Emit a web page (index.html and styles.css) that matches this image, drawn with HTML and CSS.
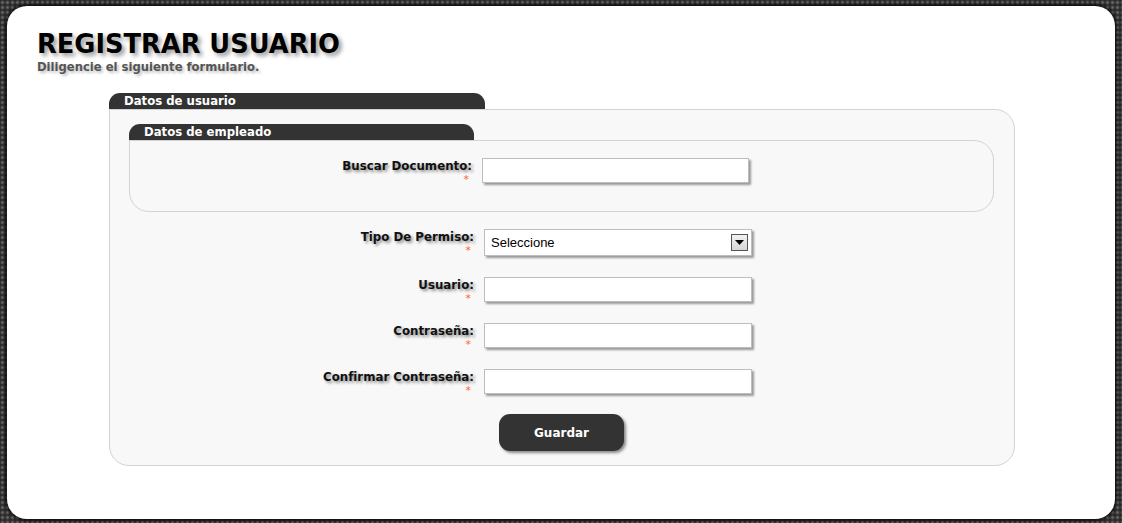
FILE: index.html
```html
<!DOCTYPE html>
<html lang="es">
<head>
<meta charset="utf-8">
<title>Registrar Usuario</title>
<link rel="stylesheet" href="styles.css">
</head>
<body>
<div class="page">
  <h1 class="title">REGISTRAR USUARIO</h1>
  <p class="subtitle">Diligencie el siguiente formulario.</p>

  <section class="group">
    <div class="tab tab-outer">Datos de usuario</div>
    <div class="box">
      <div class="tab tab-inner">Datos de empleado</div>
      <div class="inner-box">
        <div class="row row-inner">
          <label class="label"><span class="label-text">Buscar Documento:</span><span class="req">*</span></label>
          <input class="field" type="text">
        </div>
      </div>

      <div class="row">
        <label class="label"><span class="label-text">Tipo De Permiso:</span><span class="req">*</span></label>
        <div class="select">
          <span class="select-text">Seleccione</span>
          <span class="select-btn"><svg width="9" height="5" viewBox="0 0 9 5"><path d="M0 0h9L4.5 5z" fill="#000"/></svg></span>
        </div>
      </div>
      <div class="row">
        <label class="label"><span class="label-text">Usuario:</span><span class="req">*</span></label>
        <input class="field" type="text">
      </div>
      <div class="row">
        <label class="label"><span class="label-text">Contraseña:</span><span class="req">*</span></label>
        <input class="field" type="password">
      </div>
      <div class="row row-last">
        <label class="label"><span class="label-text">Confirmar Contraseña:</span><span class="req">*</span></label>
        <input class="field" type="password">
      </div>
      <div class="actions">
        <button class="btn" type="button">Guardar</button>
      </div>
    </div>
  </section>
</div>
</body>
</html>
```
FILE: styles.css
```css
* { box-sizing: border-box; }
html, body { margin: 0; padding: 0; }
body {
  height: 523px;
  overflow: hidden;
  background-color: #2e2e2e;
  background-image: radial-gradient(circle at 2.5px 2.5px, #6a6a6a 0, #555 1.2px, #2b2b2b 2.4px);
  background-size: 5px 5px;
  padding: 6px 7px 4px 7px;
  font-family: "DejaVu Sans", Verdana, sans-serif;
}
.page {
  height: 513px;
  background: #fff;
  border-radius: 20px;
  box-shadow: 0 0 4px 1px #000;
  padding: 23px 100px 0 30px;
}
.title {
  margin: 0;
  font-size: 25.7px;
  font-weight: bold;
  color: #000;
  line-height: 30px;
  text-shadow: 3px 3px 4px #999;
}
.subtitle {
  margin: 1px 0 0;
  font-size: 11.6px;
  font-weight: bold;
  color: #555;
  line-height: 14px;
  text-shadow: 2px 2px 3px #bbb;
}
.group {
  margin: 19px 0 0 72px;
}
.tab {
  background: #333;
  color: #fff;
  font-weight: bold;
  font-size: 11.7px;
  line-height: 16px;
  border-radius: 11px 11px 0 0;
  padding-left: 15px;
}
.tab-outer {
  width: 376px;
  height: 16px;
}
.box {
  background: #f8f8f8;
  border: 1px solid #d3d3d3;
  border-radius: 0 20px 20px 20px;
  padding: 14px 20px 14px 19px;
  height: 357px;
}
.tab-inner {
  width: 345px;
  height: 16px;
  padding-left: 15px;
}
.inner-box {
  border: 1px solid #d3d3d3;
  border-radius: 0 20px 20px 20px;
  height: 72px;
  padding-top: 17px;
  margin-bottom: 17px;
}
.row {
  display: flex;
  align-items: flex-start;
  gap: 10px;
  margin-bottom: 21px;
}
.row-last { margin-bottom: 20px; }
.label {
  width: 345px;
  height: 25px;
  flex: none;
  display: flex;
  flex-direction: column;
  align-items: flex-end;
  padding-top: 1px;
}
.row-inner .label { width: 342px; }
.label-text {
  font-size: 11.8px;
  font-weight: bold;
  color: #111;
  line-height: 14px;
  text-shadow: 2px 2px 3px #888;
}
.req {
  color: #ff6633;
  font-size: 11px;
  line-height: 10px;
  margin-top: 2px;
  padding-right: 3px;
}
.field {
  width: 268px;
  height: 25px;
  border: 1px solid #bdbdbd;
  background: #fff;
  box-shadow: 2px 2px 2px #999;
  margin: 0;
  padding: 0 5px;
  outline: none;
}
.row-inner .field { width: 267px; }
.select {
  width: 268px;
  height: 27px;
  border: 1px solid #bdbdbd;
  background: #fff;
  box-shadow: 2px 2px 2px #999;
  display: flex;
  align-items: center;
  justify-content: space-between;
  padding: 0 3px 0 6px;
}
.select-text {
  font-family: "Liberation Sans", Arial, sans-serif;
  font-size: 13px;
  color: #000;
}
.select-btn {
  width: 17px;
  height: 17px;
  border: 1px solid #555;
  background: linear-gradient(#f2f2f2, #d6d6d6);
  display: flex;
  align-items: center;
  justify-content: center;
}
.select-btn svg { display: block; }
.actions {
  display: flex;
  justify-content: center;
}
.btn {
  width: 125px;
  height: 37px;
  background: #333;
  color: #fff;
  border: none;
  border-radius: 11px;
  font-family: "DejaVu Sans", Verdana, sans-serif;
  font-size: 12px;
  font-weight: bold;
  padding-top: 2px;
  box-shadow: 2px 2px 3px #888;
  cursor: pointer;
}
```
